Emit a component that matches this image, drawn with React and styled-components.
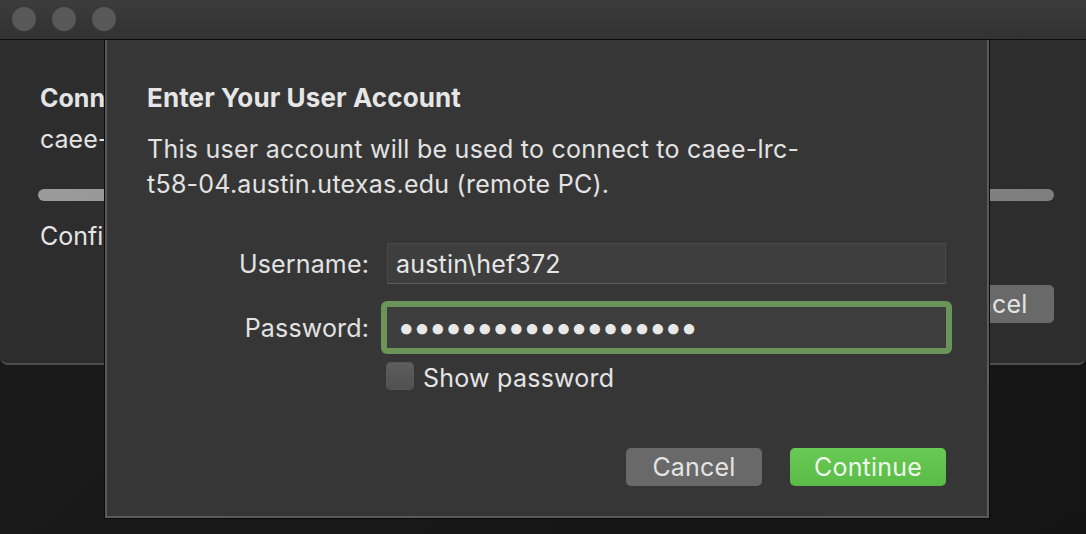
import React from "react";
import styled, { createGlobalStyle } from "styled-components";

const GlobalStyle = createGlobalStyle`
  html, body {
    margin: 0;
    padding: 0;
    background: #161616;
  }
  body {
    font-family: "Inter", "Liberation Sans", sans-serif;
    -webkit-font-smoothing: antialiased;
  }
`;

const App = () => {
	return (
		<Screen>
			<GlobalStyle />
			<BackWindow>
				<TitleBar>
					<Light />
					<Light />
					<Light />
				</TitleBar>
				<BackContent>
					<Peek>
						<BackTitle>Conn</BackTitle>
						<BackLine>caee-</BackLine>
					</Peek>
					<Progress />
					<Peek>
						<BackLine>Confi</BackLine>
					</Peek>
					<BackActions>
						<Button>Cancel</Button>
					</BackActions>
				</BackContent>
			</BackWindow>

			<Sheet>
				<Heading>Enter Your User Account</Heading>
				<Message>
					This user account will be used to connect to caee-lrc-
					<br />
					t58-04.austin.utexas.edu (remote PC).
				</Message>

				<Form>
					<Label>Username:</Label>
					<Field>austin\hef372</Field>
					<Label>Password:</Label>
					<Focus>
						<Field focused>
							<Dots>{"•".repeat(19)}</Dots>
						</Field>
					</Focus>
					<span />
					<CheckRow>
						<Check />
						<CheckText>Show password</CheckText>
					</CheckRow>
				</Form>

				<Actions>
					<Button>Cancel</Button>
					<Button primary>Continue</Button>
				</Actions>
			</Sheet>
		</Screen>
	);
};

export default App;

const Screen = styled.div`
	position: relative;
	width: 1086px;
	height: 534px;
	overflow: hidden;
	background: linear-gradient(135deg, #1c1c1c, #141414);
`;

const BackWindow = styled.div`
	height: 365px;
	background: #2d2d2d;
	border-bottom: 2px solid #4e4e4e;
	border-radius: 0 0 8px 8px;
	box-sizing: border-box;
	display: flex;
	flex-direction: column;
`;

const TitleBar = styled.div`
	flex: none;
	height: 37px;
	padding: 0 0 2px 12px;
	border-bottom: 1px solid #0e0e0e;
	background: linear-gradient(to bottom, #3c3c3c, #323232);
	display: flex;
	align-items: center;
	gap: 16px;
`;

const Light = styled.span`
	width: 24px;
	height: 24px;
	border-radius: 50%;
	background: #585858;
`;

const BackContent = styled.div`
	display: flex;
	flex-direction: column;
	padding: 44px 32px 0 40px;
	color: #e4e4e4;
`;

const Peek = styled.div`
	width: 68px;
	overflow: hidden;
`;

const BackTitle = styled.div`
	font-size: 25px;
	font-weight: 700;
	line-height: 28px;
	white-space: nowrap;
`;

const BackLine = styled.div`
	font-size: 25px;
	line-height: 28px;
	margin-top: 13px;
	white-space: nowrap;
`;

const Progress = styled.div`
	height: 12px;
	margin: 36px 0 8px -2px;
	border-radius: 6px;
	background: linear-gradient(to right, #9a9a9a, #7e7e7e);
`;

const BackActions = styled.div`
	display: flex;
	justify-content: flex-end;
	margin-top: 35px;
`;

const Sheet = styled.div`
	position: absolute;
	top: 40px;
	left: 105px;
	width: 884px;
	height: 478px;
	box-sizing: border-box;
	background: #363636;
	border: 2px solid #5a5a5a;
	border-top: none;
	box-shadow: 0 0 0 1px #0b0b0b;
	padding: 44px 41px 0 40px;
	color: #e4e4e4;
	display: flex;
	flex-direction: column;
`;

const Heading = styled.h1`
	margin: 0;
	font-size: 26px;
	font-weight: 700;
	line-height: 28px;
	letter-spacing: 0.1px;
	color: #e6e6e6;
`;

const Message = styled.p`
	margin: 20px 0 0;
	font-size: 25px;
	line-height: 35px;
	letter-spacing: 0.25px;
	color: #e2e2e2;
`;

const Form = styled.div`
	display: grid;
	grid-template-columns: 222px 559px;
	column-gap: 18px;
	row-gap: 17px;
	align-items: center;
	margin-top: 41px;
`;

const Label = styled.div`
	text-align: right;
	font-size: 25px;
	letter-spacing: 0.15px;
	color: #e2e2e2;
`;

const Field = styled.div`
	height: 41px;
	box-sizing: border-box;
	background: #3e3e3e;
	border: 1px solid #4a4a4a;
	border-bottom-color: #5c5c5c;
	padding: 0 ${({ focused }) => (focused ? "9px" : "8px")};
	display: flex;
	align-items: center;
	font-size: 25px;
	letter-spacing: 0.2px;
	color: #e6e6e6;
	${({ focused }) => focused && "border-color: #3c3c3c;"}
`;

const Focus = styled.div`
	margin: 0 -6px;
	padding: 6px;
	border-radius: 6px;
	background: #6b9459;
`;

const Dots = styled.span`
	font-size: 33px;
	letter-spacing: -2.85px;
	color: #e8e8e8;
	line-height: 1;
`;

const CheckRow = styled.div`
	height: 28px;
	display: flex;
	align-items: center;
	gap: 9px;
	margin-top: -9px;
	margin-left: -1px;
`;

const Check = styled.span`
	width: 28px;
	height: 28px;
	border-radius: 5px;
	background: linear-gradient(to bottom, #5e5e5e, #505050);
	box-shadow: inset 0 0 0 1px #575757;
`;

const CheckText = styled.span`
	margin-top: 3px;
	font-size: 25px;
	letter-spacing: 0.25px;
	color: #e4e4e4;
`;

const Actions = styled.div`
	display: flex;
	justify-content: flex-end;
	gap: 28px;
	margin-top: 58px;
`;

const Button = styled.button`
	height: 38px;
	min-width: ${({ primary }) => (primary ? "156px" : "136px")};
	padding: 0 20px;
	border: none;
	border-radius: 5px;
	font-family: "Inter", "Liberation Sans", sans-serif;
	font-size: 25px;
	letter-spacing: 0.2px;
	color: ${({ primary }) => (primary ? "#eef8ea" : "#e4e4e4")};
	background: ${({ primary }) =>
		primary ? "linear-gradient(to bottom, #68c955, #5abb47)" : "#696969"};
`;
